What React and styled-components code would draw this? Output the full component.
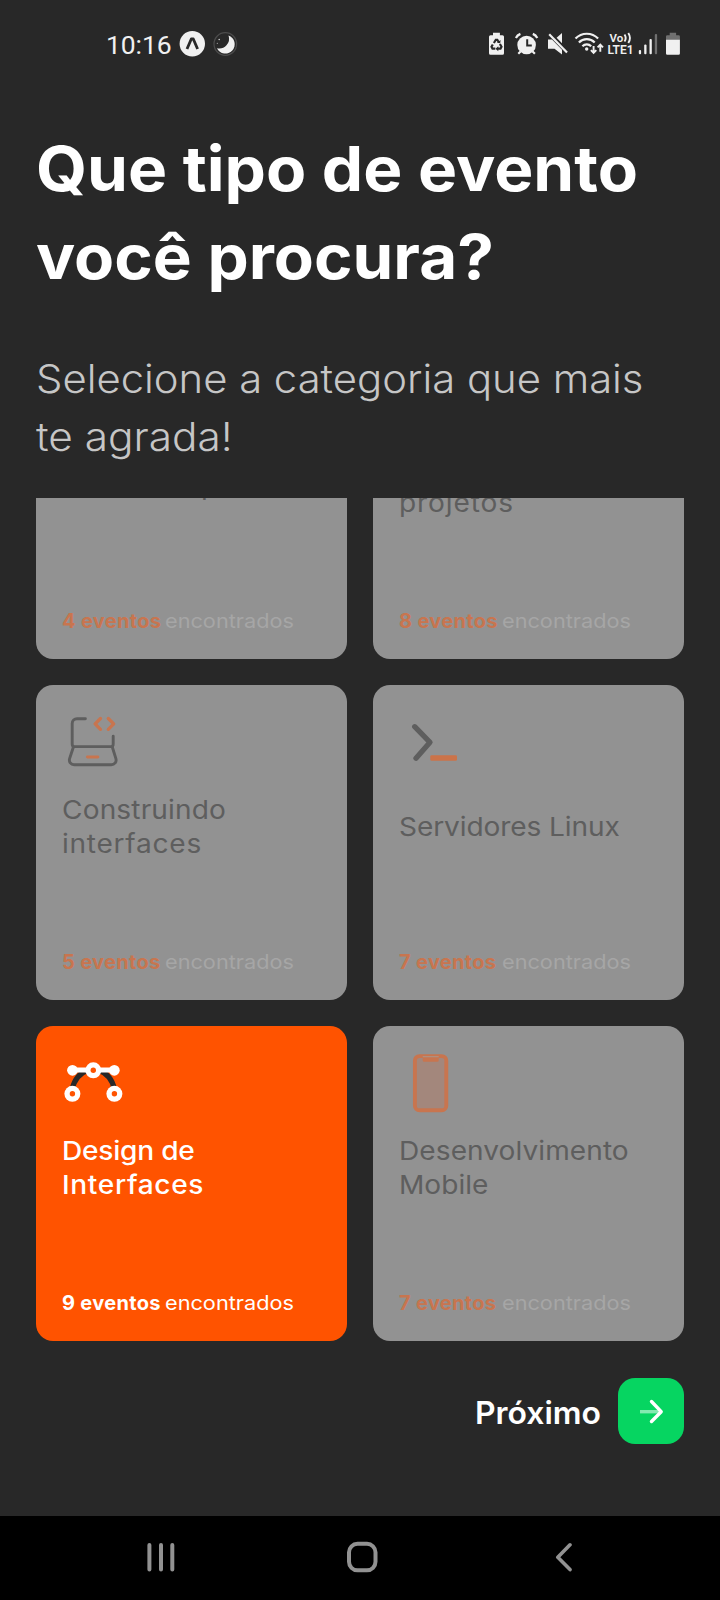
import React from "react";
import styled, { createGlobalStyle } from "styled-components";

const GlobalStyle = createGlobalStyle`
  * { box-sizing: border-box; }
  body { margin: 0; background: #282828; font-family: Inter, "Liberation Sans", sans-serif; }
  svg { display: block; flex: none; }
`;

const Screen = styled.div`
  display: flex;
  flex-direction: column;
  width: 720px;
  height: 1600px;
  overflow: hidden;
  background: #282828;
`;

const StatusBar = styled.header`
  display: flex;
  align-items: center;
  justify-content: space-between;
  flex: none;
  height: 88px;
  padding: 0 39px 0 106px;
  color: #f0f0f0;
`;

const StatusGroup = styled.div`
  display: flex;
  align-items: center;
`;

const Clock = styled.span`
  width: 73px;
  font: 400 26.5px/30px Roboto, sans-serif;
  letter-spacing: -0.1px;
  padding-top: 2px;
`;

const StatusIcon = styled.svg`
  width: ${(p) => p.$w}px;
  height: 26px;
  margin-left: ${(p) => p.$gap || 0}px;
  overflow: visible;
`;

const Heading = styled.section`
  flex: none;
  height: 410px;
  padding: 37px 0 0 36px;
  white-space: nowrap;
`;

/* Widens the letter shapes of a run of text. */
const Wide = styled.span`
  display: inline-block;
  transform: scaleX(${(p) => p.$by});
  transform-origin: left;
`;

const Title = styled.h1`
  margin: 0;
  font-size: 62px;
  font-weight: 700;
  line-height: 87.5px;
  color: #ffffff;
`;

const Subtitle = styled.p`
  margin: 50px 0 0;
  font-size: 39px;
  font-weight: 350;
  line-height: 58.4px;
  color: #c6c6c6;
`;

const CategoryList = styled.main`
  display: flex;
  flex-direction: column;
  justify-content: flex-end;
  flex: none;
  height: 843px;
  padding: 0 36px;
  overflow: hidden;
`;

const CategoryGrid = styled.div`
  display: grid;
  grid-template-columns: 311px 311px;
  grid-auto-rows: 315px;
  gap: 26px;
  flex: none;
`;

const Card = styled.article`
  display: flex;
  flex-direction: column;
  padding: 27px 26px 26px 27px;
  border-radius: 17px;
  background: ${(p) => (p.$active ? "#ff5300" : "#929292")};
  color: ${(p) => (p.$active ? "#ffffff" : "#5e5e5e")};
`;

const CardIcon = styled.svg`
  width: 60px;
  height: 60px;
  fill: none;
`;

const CardTitle = styled.h2`
  display: flex;
  flex-direction: column;
  justify-content: center;
  flex: none;
  height: 68px;
  margin: 21px 0 auto -1px;
  font-size: 26px;
  font-weight: ${(p) => (p.$active ? 500 : 440)};
  line-height: 34px;
  white-space: nowrap;
`;

const TitleLine = styled.span`
  letter-spacing: ${(p) => p.$spacing}em;
  transform: scaleX(1.08);
  transform-origin: left;
`;

const EventCount = styled.p`
  display: flex;
  margin: 0 0 0 -1px;
  font-size: 20px;
  line-height: 24px;
  color: ${(p) => (p.$active ? "#ffffff" : "#a6a6a6")};
`;

const Count = styled.strong`
  width: 103px;
  font-weight: 700;
  letter-spacing: 0.016em;
  color: ${(p) => (p.$active ? "#ffffff" : "#c8754f")};
`;

const Footer = styled.footer`
  display: flex;
  align-items: center;
  justify-content: flex-end;
  flex: none;
  height: 66px;
  margin: 37px 36px 72px;
`;

const NextLabel = styled.span`
  width: 143px;
  padding-top: 4px;
  font-size: 31px;
  font-weight: 600;
  line-height: 40px;
  color: #ffffff;
`;

const NextButton = styled.button`
  width: 66px;
  height: 66px;
  padding: 0;
  border: 0;
  border-radius: 17px;
  background: #06d561;
`;

const NavBar = styled.nav`
  display: flex;
  align-items: center;
  gap: 170px;
  flex: none;
  height: 84px;
  padding: 0 147px 2px;
  background: #000000;
  fill: none;
  stroke: #929292;
  stroke-width: 4;
  stroke-linecap: round;
  stroke-linejoin: round;
`;

const MUTED = "#5e5e5e";
const ACCENT = "#c8754f";

const LaptopIcon = () => (
  <CardIcon viewBox="0 0 60 60" stroke={MUTED} strokeWidth="2.9" strokeLinecap="round" strokeLinejoin="round">
    <path d="M22.4 6.7H14a4.8 4.8 0 0 0-4.8 4.8V32q0 2.6 2 2.6H48.2q2 0 2-2.6V24.2" />
    <path d="M10.4 35 6.6 46.6c-.9 3.4 1.2 6.1 4.6 6.1h37c3.4 0 5.6-2.7 4.7-6.1L49.3 35" />
    <g stroke={ACCENT}>
      <path d="m37.5 6.5-5.4 5.4 5.4 5.4M45.3 6.5l5.4 5.4-5.4 5.4" strokeWidth="3.3" />
      <path d="M24.4 45h10.5" />
    </g>
  </CardIcon>
);

const TerminalIcon = () => (
  <CardIcon viewBox="0 0 60 60">
    <path d="M14.7 14.7 30 30.3 16 46.3" stroke={MUTED} strokeWidth="5.3" strokeLinecap="round" strokeLinejoin="round" />
    <rect x="30.3" y="43.2" width="26.7" height="5.5" rx="1.2" fill="#cb7349" />
  </CardIcon>
);

const BezierIcon = () => (
  <CardIcon viewBox="0 0 60 60">
    <path d="M9.3 36C11 27.5 16 20.5 25 17M51.3 36C49.6 27.5 44.6 20.5 35.6 17" stroke="#282828" strokeWidth="5.2" />
    <path d="M9.3 17H51.3" stroke="#fff" strokeWidth="5.2" />
    <g fill="#fff">
      <circle cx="9.5" cy="17.3" r="5.4" />
      <circle cx="51.3" cy="17.3" r="5.4" />
      <circle cx="30.3" cy="17.3" r="8" />
      <circle cx="9.4" cy="40.8" r="8" />
      <circle cx="51.4" cy="40.8" r="8" />
    </g>
    <g fill="#ff5300">
      <circle cx="30.3" cy="17.3" r="2.7" />
      <circle cx="9.4" cy="40.8" r="2.7" />
      <circle cx="51.4" cy="40.8" r="2.7" />
    </g>
  </CardIcon>
);

const PhoneIcon = () => (
  <CardIcon viewBox="0 0 60 60">
    <rect x="14.9" y="3.1" width="31.4" height="54.1" rx="4.5" fill="#a3877c" stroke={ACCENT} strokeWidth="3.9" />
    <path d="M22.7 4.4h16v3q0 1.3-1.3 1.3h-13.4q-1.3 0-1.3-1.3z" fill={ACCENT} />
    <path d="M22.7 3.7h16" stroke="#ad9284" strokeWidth="1.2" />
  </CardIcon>
);

const BlankIcon = () => <CardIcon viewBox="0 0 60 60" />;

const categories = [
  { lines: [["Front-end pro", 0]], count: 4, Icon: BlankIcon },
  { lines: [["Gestão de", 0], ["projetos", 0.031]], count: 8, Icon: BlankIcon },
  { lines: [["Construindo", 0.005]], count: 5, Icon: LaptopIcon },
  { lines: [["Servidores Linux", -0.004]], count: 7, Icon: TerminalIcon },
  { lines: [["Design de", -0.008], ["Interfaces", 0.023]], count: 9, Icon: BezierIcon, active: true },
  { lines: [["Desenvolvimento", 0.002], ["Mobile", 0]], count: 7, Icon: PhoneIcon },
];
categories[2].lines.push(["interfaces", 0.026]);

function CategoryCard({ lines, count, Icon, active }) {
  return (
    <Card $active={active}>
      <Icon />
      <CardTitle $active={active}>
        {lines.map(([text, spacing]) => (
          <TitleLine key={text} $spacing={spacing}>{text}</TitleLine>
        ))}
      </CardTitle>
      <EventCount $active={active}>
        <Count $active={active}>{count} eventos</Count>
        <Wide $by={1.085}>encontrados</Wide>
      </EventCount>
    </Card>
  );
}

function Status() {
  return (
    <StatusBar>
      <StatusGroup>
        <Clock>10:16</Clock>
        <StatusIcon $w={26} viewBox="0 0 26 26">
          <circle cx="13.3" cy="12.7" r="12.7" fill="#f0f0f0" />
          <path d="M8 18 12.3 8h2L18.6 18" fill="none" stroke="#282828" strokeWidth="2.8" strokeLinejoin="round" />
        </StatusIcon>
        <StatusIcon $w={24} $gap={8} viewBox="0 0 24 26">
          <circle cx="12.3" cy="13" r="11.3" fill="none" stroke="#4c4c4c" strokeWidth="1.2" />
          <path d="M15.5 4.5A9.3 9.3 0 1 1 4 17.2 9.8 9.8 0 0 0 15.5 4.5z" fill="#f0f0f0" />
          <circle cx="6.2" cy="8.5" r=".8" fill="#ccc" />
          <circle cx="4.3" cy="12.3" r=".6" fill="#aaa" />
        </StatusIcon>
      </StatusGroup>
      <StatusGroup>
        <StatusIcon $w={15} viewBox="0 0 15 26" fill="#f0f0f0">
          <path d="M4 4.3V1.8h6.9v2.5h2.6q1.5 0 1.5 1.5v16.4q0 1.5-1.5 1.5h-12Q0 23.7 0 22.2V5.8q0-1.5 1.5-1.5z" />
          <g fill="none" stroke="#282828" strokeWidth="2.2">
            <path d="m4.9 12 1.9-3.2h1.5l1.5 2.5M10.900 13l1.600 2.800-1 1.900H9M6.300 17.700H3.500l-1-1.900 1.300-2.300" />
          </g>
          <path d="m8 11.8 3.200.5.4-3.200zM9.300 15.200v5L6.500 17.700z" fill="#282828" />
        </StatusIcon>
        <StatusIcon $w={23} $gap={11} viewBox="0 0 23 26" fill="none" stroke="#f0f0f0" strokeWidth="2.2">
          <circle cx="11.6" cy="14" r="9.3" fill="#f0f0f0" stroke="none" />
          <path d="M12.2 8.3v6.2h4.6" stroke="#282828" strokeWidth="2" />
          <path d="M.9 7Q2.3 4.1 5.4 2.9M22.3 7Q20.9 4.1 17.8 2.9M5.6 20.5 3.3 22.7M17.6 20.5l2.3 2.2" />
        </StatusIcon>
        <StatusIcon $w={20} $gap={10} viewBox="0 0 20 26" fill="#f0f0f0">
          <path d="M0 8.6h4L14 18.8v4.6L6.5 17.8H0zM8.600 6.800 14 1.900v10.400z" />
          <path d="M1.2 3.2 19 21.5" stroke="#f0f0f0" strokeWidth="2.2" />
        </StatusIcon>
        <StatusIcon $w={29} $gap={7} viewBox="0 0 29 26" fill="none" stroke="#f0f0f0" strokeWidth="2.2">
          <path d="M.5 7.6a15.6 15.6 0 0 1 22.6 0M3.9 11.5a11 11 0 0 1 15.8 0M7.4 15.2a6.2 6.2 0 0 1 8.8 0" />
          <circle cx="11.7" cy="18" r="1.7" fill="#f0f0f0" stroke="none" />
          <path d="M18.6 15v6.8M15.9 19.2l2.7 2.8 2.7-2.8M25.3 20.7v-7M22.6 16.4l2.7-2.8 2.7 2.8" strokeWidth="1.9" />
        </StatusIcon>
        <StatusIcon $w={27} $gap={3} viewBox="0 0 27 26" fill="#f0f0f0" fontFamily="Roboto, sans-serif" fontWeight="600">
          <text x="2.5" y="11" fontSize="11.5">Vo</text>
          <path d="M17.5 3.5q2.4 3.5 0 7M21.3 1.9q3.3 5.1 0 10.2" fill="none" stroke="#f0f0f0" strokeWidth="1.9" />
          <text x=".5" y="23.2" fontSize="12" textLength="26">LTE1</text>
        </StatusIcon>
        <StatusIcon $w={19} $gap={4} viewBox="0 0 19 26" fill="#f0f0f0">
          <rect x=".8" y="19" width="2.3" height="4.3" rx="1" />
          <rect x="6.2" y="13.5" width="2.3" height="9.8" rx="1" />
          <rect x="11.5" y="8" width="2.3" height="15.3" rx="1" />
          <rect x="16.8" y="3" width="2.3" height="20.3" rx="1" fill="#707070" />
        </StatusIcon>
        <StatusIcon $w={15} $gap={9} viewBox="0 0 15 26">
          <path d="M0 9V5.600q0-1.300 1.300-1.300h2.400V1.800h6.400v2.500h2.500q1.300 0 1.300 1.300V9z" fill="#707070" />
          <path d="M0 8.700h13.900v13.700q0 1.300-1.300 1.300H1.300Q0 23.700 0 22.400z" fill="#f0f0f0" />
        </StatusIcon>
      </StatusGroup>
    </StatusBar>
  );
}

export default function App() {
  return (
    <Screen>
      <GlobalStyle />
      <Status />
      <Heading>
        <Title>
          <Wide $by={1.06}>Que tipo de evento</Wide>
          <br />
          <Wide $by={1.057}>você procura?</Wide>
        </Title>
        <Subtitle>
          <Wide $by={1.072}>Selecione a categoria que mais</Wide>
          <br />
          <Wide $by={1.086}>te agrada!</Wide>
        </Subtitle>
      </Heading>
      <CategoryList>
        <CategoryGrid>
          {categories.map((c) => (
            <CategoryCard key={c.lines[0][0]} {...c} />
          ))}
        </CategoryGrid>
      </CategoryList>
      <Footer>
        <NextLabel><Wide $by={1.03}>Próximo</Wide></NextLabel>
        <NextButton aria-label="Próximo">
          <svg width="66" height="66" viewBox="0 0 66 66" fill="none" stroke="#fff" strokeWidth="3.4" strokeLinecap="round" strokeLinejoin="round">
            <path d="M22 33.7H41" opacity=".5" strokeLinecap="butt" />
            <path d="M33.500 23.500 43.200 33.700 33.500 43.500" />
          </svg>
        </NextButton>
      </Footer>
      <NavBar>
        <svg width="28" height="32" viewBox="0 0 28 32">
          <path d="M2.4 4v24.500M14 4v24.500M25.300 4v24.500" />
        </svg>
        <svg width="38" height="32" viewBox="0 0 38 32">
          <rect x="4" y="2.800" width="26.500" height="26.500" rx="8.500" />
        </svg>
        <svg width="19" height="32" viewBox="0 0 19 32" strokeWidth="3.6">
          <path d="M17 3.800 4.800 16.200 17 28.600" />
        </svg>
      </NavBar>
    </Screen>
  );
}
